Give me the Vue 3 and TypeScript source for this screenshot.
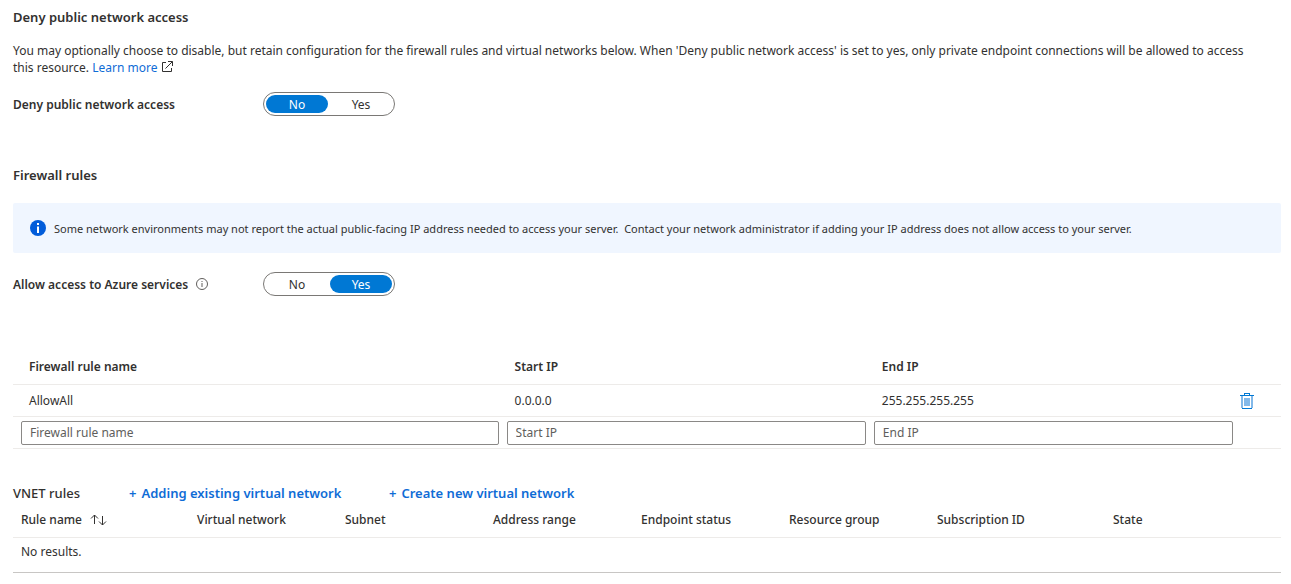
<script setup lang="ts">
import { ref } from 'vue'

interface FirewallRule {
  name: string
  start: string
  end: string
}

const denyAccess = ref('No')
const allowAzure = ref('Yes')
const options = ['No', 'Yes']
const rules = ref<FirewallRule[]>([{ name: 'AllowAll', start: '0.0.0.0', end: '255.255.255.255' }])
const draft = ref<FirewallRule>({ name: '', start: '', end: '' })
const vnetColumns = [
  'Virtual network',
  'Subnet',
  'Address range',
  'Endpoint status',
  'Resource group',
  'Subscription ID',
  'State',
]

function removeRule(index: number) {
  rules.value.splice(index, 1)
}
</script>

<template>
  <main class="page">
    <h2 class="heading">Deny public network access</h2>
    <p class="intro">
      You may optionally choose to disable, but retain configuration for the firewall rules and virtual networks below. When 'Deny public network access' is set to yes, only private endpoint connections will be allowed to access this resource.
      <a class="link" href="#">Learn more</a>
      <svg class="external" viewBox="0 0 12 12" width="12" height="12" aria-hidden="true">
        <path d="M5 1.5H1.5v9h9V7M7 .5h4.5V5M11.3.7 4.5 7.5" />
      </svg>
    </p>

    <div class="field" role="radiogroup" aria-labelledby="deny-label">
      <span id="deny-label" class="field-label">Deny public network access</span>
      <div class="toggle">
        <label v-for="o in options" :key="o" class="option" :class="{ active: denyAccess === o }">
          <input v-model="denyAccess" type="radio" name="deny" :value="o" />{{ o }}
        </label>
      </div>
    </div>

    <h2 class="heading firewall">Firewall rules</h2>
    <div class="notice">
      <svg viewBox="0 0 16 16" width="16" height="16" aria-hidden="true">
        <circle cx="8" cy="8" r="8" fill="#015cda" />
        <path d="M7 6.5h2V13H7zM7 3h2v2H7z" fill="#fff" />
      </svg>
      <span>Some network environments may not report the actual public-facing IP address needed to access your server.&nbsp; Contact your network administrator if adding your IP address does not allow access to your server.</span>
    </div>

    <div class="field" role="radiogroup" aria-labelledby="azure-label">
      <span class="field-label">
        <span id="azure-label">Allow access to Azure services</span>
        <svg viewBox="0 0 12 12" width="12" height="12" aria-hidden="true">
          <circle cx="6" cy="6" r="5.5" fill="none" stroke="#605e5c" />
          <path d="M5.5 5h1v4h-1zM5.5 3h1v1h-1z" fill="#605e5c" />
        </svg>
      </span>
      <div class="toggle">
        <label v-for="o in options" :key="o" class="option" :class="{ active: allowAzure === o }">
          <input v-model="allowAzure" type="radio" name="azure" :value="o" />{{ o }}
        </label>
      </div>
    </div>

    <table class="rules">
      <thead>
        <tr>
          <th scope="col">Firewall rule name</th>
          <th scope="col">Start IP</th>
          <th scope="col">End IP</th>
          <td></td>
        </tr>
      </thead>
      <tbody>
        <tr v-for="(r, i) in rules" :key="r.name">
          <td>{{ r.name }}</td>
          <td>{{ r.start }}</td>
          <td>{{ r.end }}</td>
          <td class="action">
            <button type="button" class="delete" aria-label="Delete rule" @click="removeRule(i)">
              <svg viewBox="0 0 14 16" width="14" height="16" shape-rendering="crispEdges" aria-hidden="true">
                <path d="M1 3h2v12H1zM11 3h2v12h-2zM4 5h6v8H4z" fill="#83b9e9" />
                <path d="M0 2h14v1H0zM2 15h10v1H2zM4 0h6v1H4zM4 1h1v1H4zM9 1h1v1H9z" fill="#0078d4" />
              </svg>
            </button>
          </td>
        </tr>
        <tr class="entry">
          <td><input v-model="draft.name" type="text" placeholder="Firewall rule name" aria-label="Firewall rule name" /></td>
          <td><input v-model="draft.start" type="text" placeholder="Start IP" aria-label="Start IP" /></td>
          <td><input v-model="draft.end" type="text" placeholder="End IP" aria-label="End IP" /></td>
          <td></td>
        </tr>
      </tbody>
    </table>

    <div class="vnet-bar">
      <h2 class="vnet-title">VNET rules</h2>
      <a class="link add" href="#"><span>+</span>Adding existing virtual network</a>
      <a class="link add" href="#"><span>+</span>Create new virtual network</a>
    </div>
    <table class="vnet">
      <thead>
        <tr>
          <th scope="col">
            <button type="button" class="sort">
              Rule name
              <svg viewBox="0 0 17 12" width="17" height="12" aria-hidden="true">
                <path d="M4.5 10V1M1 4.5 4.5 1 8 4.5M12.5 2v9M9 7.5l3.5 3.5L16 7.5" />
              </svg>
            </button>
          </th>
          <th v-for="c in vnetColumns" :key="c" scope="col">{{ c }}</th>
        </tr>
      </thead>
      <tbody>
        <tr class="empty">
          <td colspan="8">No results.</td>
        </tr>
      </tbody>
    </table>
  </main>
</template>

<style>
body {
  background: #fff;
}
</style>

<style scoped>
.page {
  box-sizing: border-box;
  padding: 8px 10px 0 13px;
  font-family: "Noto Sans", "Open Sans", sans-serif;
  font-size: 12px;
  line-height: 17px;
  color: #323130;
}
.heading {
  margin: 0;
  font-size: 13px;
  line-height: 18px;
  font-weight: 600;
}
.intro {
  margin: 16px 0;
  padding-right: 20px;
}
.link {
  color: #0f6cd6;
  text-decoration: none;
}
.external {
  margin-left: 4px;
  vertical-align: -1px;
  fill: none;
  stroke: #323130;
}
.field {
  display: flex;
  align-items: center;
  height: 24px;
}
.field-label {
  display: flex;
  align-items: center;
  gap: 8px;
  width: 250px;
  font-weight: 600;
}
.toggle {
  display: flex;
  gap: 2px;
  padding: 2px;
  border: 1px solid #7a7875;
  border-radius: 12px;
}
.option {
  position: relative;
  width: 62px;
  height: 18px;
  border-radius: 9px;
  line-height: 20px;
  text-align: center;
  cursor: pointer;
}
.option.active {
  background: #0078d4;
  color: #fff;
}
.option input {
  position: absolute;
  inset: 0;
  margin: 0;
  opacity: 0;
}
.firewall {
  margin: 50px 0 19px;
}
.notice {
  display: flex;
  align-items: center;
  gap: 8px;
  min-height: 50px;
  margin-bottom: 19px;
  padding-left: 17px;
  border-radius: 2px;
  background: #f0f6ff;
  font-size: 11px;
}
table {
  display: block;
}
thead,
tbody {
  display: block;
}
tr {
  display: grid;
  border-bottom: 1px solid #edebe9;
}
th,
td {
  padding: 0;
  text-align: left;
}
th {
  font-weight: 600;
}
.rules {
  margin-top: 52px;
}
.rules tr {
  grid-template-columns: 4fr 3fr 3fr 44px;
  align-items: center;
  height: 31px;
}
.rules thead tr {
  height: 36px;
}
.rules th,
.rules td {
  padding-left: 12px;
}
.rules th:first-child,
.rules td:first-child {
  padding-left: 16px;
}
.rules .action {
  padding-left: 3px;
}
.rules .entry td {
  padding: 0 4px;
}
.rules .entry td:first-child {
  padding-left: 8px;
}
.entry input {
  display: block;
  box-sizing: border-box;
  width: 100%;
  height: 24px;
  padding: 0 8px;
  border: 1px solid #8a8886;
  border-radius: 2px;
  background: #fff;
  font: inherit;
  color: inherit;
}
.entry input::placeholder {
  color: #605e5c;
  opacity: 1;
}
button {
  padding: 0;
  border: 0;
  background: none;
  font: inherit;
  color: inherit;
  cursor: pointer;
}
.delete,
.delete svg {
  display: block;
}
.vnet-bar {
  display: flex;
  margin-top: 35px;
  line-height: 18px;
}
.vnet-title {
  width: 116px;
  margin: 0;
  font-size: 13px;
  font-weight: 500;
}
.add {
  display: flex;
  gap: 5px;
  width: 260px;
  font-size: 13px;
  font-weight: 600;
}
.vnet tr {
  grid-template-columns: 44fr repeat(5, 37fr) 44fr 44fr;
}
.vnet th {
  padding: 9px 0 9px 8px;
  font-weight: 500;
}
.vnet .empty {
  display: block;
  border-color: #c8c6c4;
}
.empty td {
  display: block;
  padding: 5px 8px 12px;
}
.sort {
  display: flex;
  align-items: center;
  gap: 8px;
}
.sort svg {
  fill: none;
  stroke: #323130;
}
</style>
